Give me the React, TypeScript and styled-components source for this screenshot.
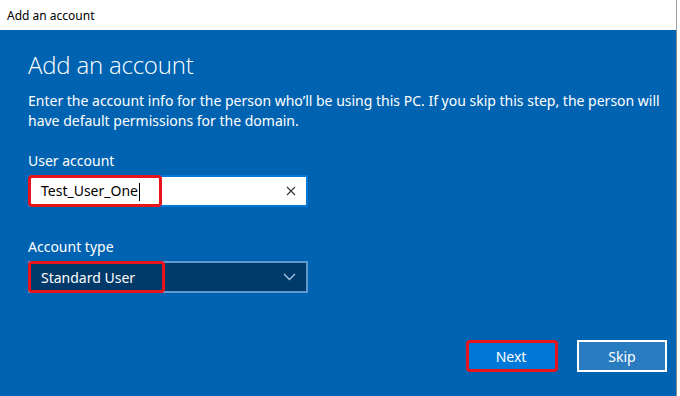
import React from 'react';
import styled, { createGlobalStyle } from 'styled-components';

const GlobalStyle = createGlobalStyle`
  html, body {
    margin: 0;
    padding: 0;
    background: #ffffff;
    overflow: hidden;
  }
  * {
    box-sizing: border-box;
  }
`;

const Window = styled.div`
  width: 680px;
  height: 396px;
  display: flex;
  flex-direction: column;
  font-family: 'Noto Sans', 'Open Sans', sans-serif;
  border-right: 3px solid #ffffff;
`;

const TitleBar = styled.div`
  height: 30px;
  flex: none;
  display: flex;
  align-items: center;
  padding-left: 7px;
  background: #ffffff;
  color: #000000;
  font-size: 12px;
  border-right: 1px solid #a0a0a0;
`;

const Body = styled.div`
  flex: 1;
  display: flex;
  flex-direction: column;
  background: #0063b1;
  color: #ffffff;
  padding: 19px 0 0 28px;
  border-right: 1px solid #8a8a8a;
`;

const Heading = styled.h1`
  margin: 0;
  font-family: 'Open Sans', 'Noto Sans', sans-serif;
  font-weight: 300;
  font-size: 24px;
  line-height: 32px;
  letter-spacing: -0.2px;
`;

const Description = styled.p`
  margin: 10px 0 0;
  width: 640px;
  font-size: 14px;
  line-height: 20px;
`;

const Label = styled.div<{ $top: number }>`
  margin-top: ${(p) => p.$top}px;
  font-size: 14px;
  line-height: 20px;
`;

const Field = styled.div<{ $dark?: boolean }>`
  position: relative;
  margin-top: 4px;
  width: 280px;
  height: 32px;
  display: flex;
  align-items: center;
  justify-content: space-between;
  padding: 0 10px 0 11px;
  font-size: 14px;
  background: ${(p) => (p.$dark ? '#003a6a' : '#ffffff')};
  color: ${(p) => (p.$dark ? '#ffffff' : '#000000')};
  border: 2px solid ${(p) => (p.$dark ? '#5e9ad0' : '#0078d7')};
`;

const Caret = styled.span`
  display: inline-block;
  width: 1px;
  height: 18px;
  margin-left: 1px;
  vertical-align: middle;
  background: #000000;
`;

const Highlight = styled.div<{ $width: number }>`
  position: absolute;
  left: -2px;
  top: -2px;
  width: ${(p) => p.$width}px;
  height: 32px;
  border: 3px solid #e8141c;
  border-radius: 4px;
  pointer-events: none;
`;

const Footer = styled.div`
  margin-top: auto;
  display: flex;
  justify-content: flex-end;
  gap: 21px;
  padding: 0 9px 24px 0;
`;

const Button = styled.button<{ $primary?: boolean }>`
  position: relative;
  width: 90px;
  height: 32px;
  font-family: 'Noto Sans', 'Open Sans', sans-serif;
  font-size: 14px;
  color: #ffffff;
  background: ${(p) => (p.$primary ? '#0078d7' : '#2a7cc0')};
  border: 2px solid ${(p) => (p.$primary ? '#0078d7' : '#ffffff')};
  padding: 0;
`;

const ClearIcon = () => (
  <svg width="10" height="10" viewBox="0 0 10 10">
    <path d="M1 1 L9 9 M9 1 L1 9" stroke="#333" strokeWidth="1.1" />
  </svg>
);

const Chevron = () => (
  <svg width="13" height="8" viewBox="0 0 13 8">
    <path d="M1 1 L6.5 6.5 L12 1" stroke="#a8c8e8" strokeWidth="1.3" fill="none" />
  </svg>
);

export default function App() {
  return (
    <>
      <GlobalStyle />
      <Window>
        <TitleBar>Add an account</TitleBar>
        <Body>
          <Heading>Add an account</Heading>
          <Description>
            Enter the account info for the person who’ll be using this PC. If you skip this step, the person will
            have default permissions for the domain.
          </Description>
          <Label $top={20}>User account</Label>
          <Field>
            <span>
              Test_User_One
              <Caret />
            </span>
            <ClearIcon />
            <Highlight $width={134} />
          </Field>
          <Label $top={30}>Account type</Label>
          <Field $dark>
            <span>Standard User</span>
            <Chevron />
            <Highlight $width={137} />
          </Field>
          <Footer>
            <Button $primary>
              Next
              <Highlight $width={92} />
            </Button>
            <Button>Skip</Button>
          </Footer>
        </Body>
      </Window>
    </>
  );
}
